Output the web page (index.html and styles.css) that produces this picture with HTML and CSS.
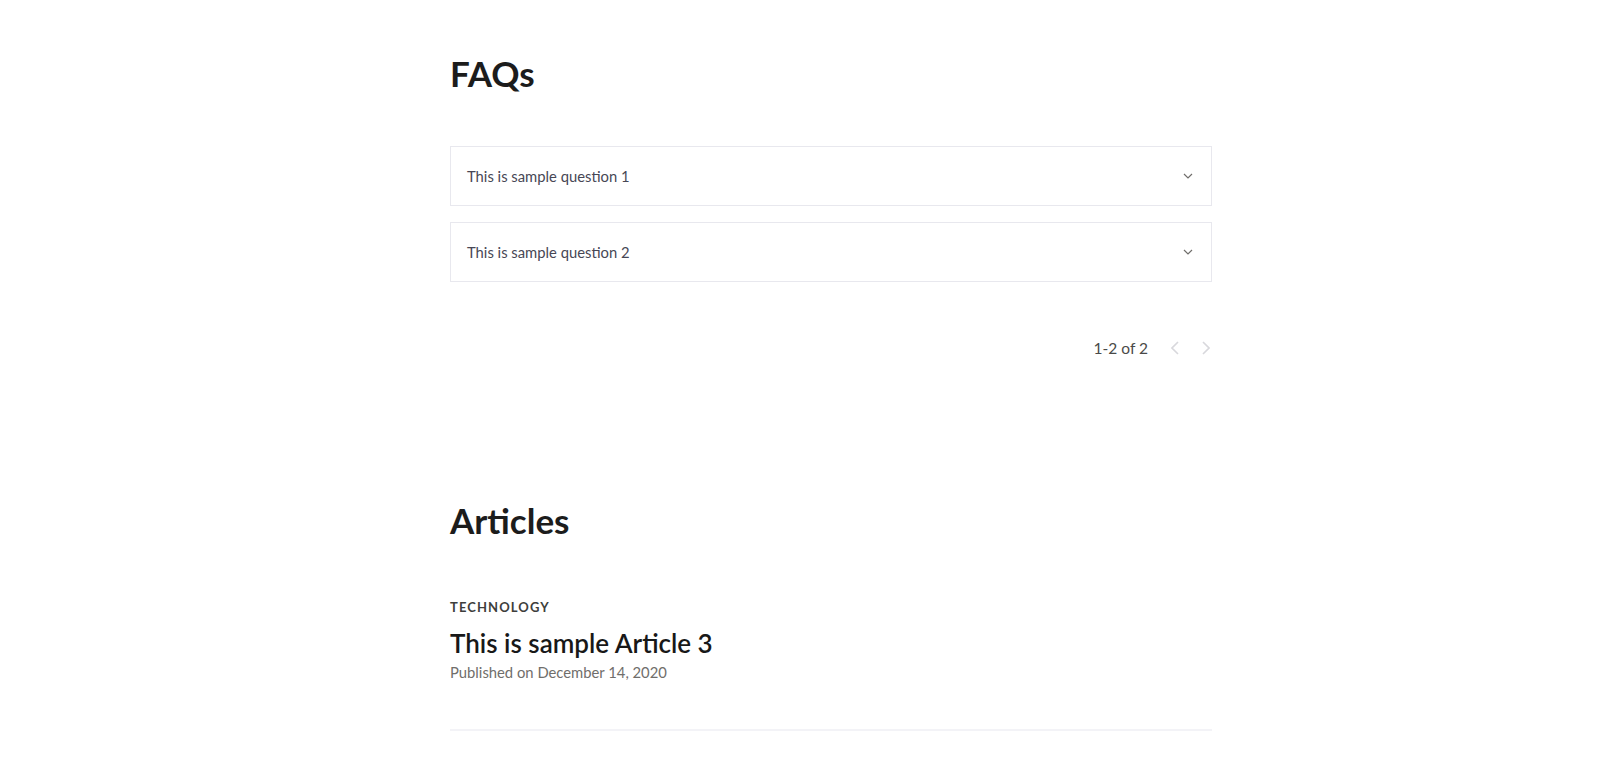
FILE: index.html
```html
<!DOCTYPE html>
<html>
	<head>
		<meta charset="utf-8">
		<title>FAQs and Articles</title>
		<link rel="stylesheet" href="styles.css">
	</head>
	<body>
		<div class="page">
			<section class="faq">
				<h2>FAQs</h2>
				<div class="faq-list">
					<div class="faq-item">
						<span>This is sample question 1</span>
						<svg class="chev" width="10" height="6" viewBox="0 0 10 6"><path d="M1 1l4 4 4-4" fill="none" stroke="#706e6b" stroke-width="1.2"/></svg>
					</div>
					<div class="faq-item">
						<span>This is sample question 2</span>
						<svg class="chev" width="10" height="6" viewBox="0 0 10 6"><path d="M1 1l4 4 4-4" fill="none" stroke="#706e6b" stroke-width="1.2"/></svg>
					</div>
				</div>
				<div class="pager">
					<span class="count">1-2 of 2</span>
					<svg class="nav" width="8" height="14" viewBox="0 0 8 14"><path d="M7 1L1 7l6 6" fill="none" stroke="#d8d8dc" stroke-width="1.6"/></svg>
					<svg class="nav" width="8" height="14" viewBox="0 0 8 14"><path d="M1 1l6 6-6 6" fill="none" stroke="#d8d8dc" stroke-width="1.6"/></svg>
				</div>
			</section>
			<section class="articles">
				<h2>Articles</h2>
				<div class="article">
					<div class="topic">TECHNOLOGY</div>
					<h3>This is sample Article 3</h3>
					<div class="date">Published on December 14, 2020</div>
				</div>
			</section>
		</div>
	</body>
</html>
```

FILE: styles.css
```css
body{
	margin: 0;
	background: #fff;
	font-family: Lato, "Noto Sans", sans-serif;
	color: #181818;
}
h2, h3{
	margin: 0;
	padding: 0;
}
.page{
	width: 762px;
	padding: 52px 0 0 450px;
}
h2{
	font-size: 35px;
	line-height: 42px;
	font-weight: 700;
	color: #1c1c1c;
}
.faq-list{
	margin-top: 52px;
	display: flex;
	flex-direction: column;
	gap: 16px;
}
.faq-item{
	height: 58px;
	border: 1px solid #e8e8ee;
	padding: 0 18px 0 16px;
	display: flex;
	align-items: center;
	justify-content: space-between;
	font-size: 14.8px;
	color: #474755;
}
.pager{
	margin-top: 46px;
	height: 40px;
	display: flex;
	align-items: center;
	justify-content: flex-end;
	gap: 24px;
	padding-right: 2px;
	font-size: 15.5px;
	color: #4a4a48;
}
.pager .nav{
	margin-left: -1px;
}
.articles{
	margin-top: 131px;
}
.article{
	margin-top: 57px;
	padding-bottom: 46px;
	border-bottom: 2px solid #f3f3f7;
}
.topic{
	font-size: 13px;
	line-height: 18px;
	font-weight: 700;
	letter-spacing: 1.1px;
	color: #3e3e3c;
}
h3{
	margin-top: 11px;
	font-size: 26px;
	line-height: 32px;
	font-weight: 600;
	color: #181818;
}
.date{
	margin-top: 2px;
	font-size: 14.8px;
	line-height: 22px;
	color: #706e6b;
}
```
